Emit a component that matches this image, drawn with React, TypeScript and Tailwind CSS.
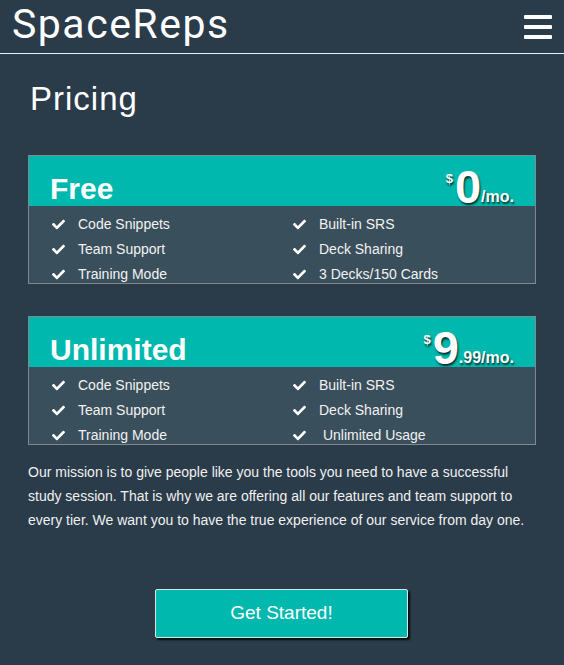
import { FaCheck } from "react-icons/fa";

type Plan = {
  name: string;
  whole: string;
  cents?: string;
  features: string[];
};

const plans: Plan[] = [
  {
    name: "Free",
    whole: "0",
    features: [
      "Code Snippets",
      "Built-in SRS",
      "Team Support",
      "Deck Sharing",
      "Training Mode",
      "3 Decks/150 Cards",
    ],
  },
  {
    name: "Unlimited",
    whole: "9",
    cents: ".99",
    features: [
      "Code Snippets",
      "Built-in SRS",
      "Team Support",
      "Deck Sharing",
      "Training Mode",
      "\u00a0Unlimited Usage",
    ],
  },
];

const PlanCard = ({ plan }: { plan: Plan }) => {
  return (
    <div className="border border-[#7e888d]">
      <div className="h-[50px] bg-[#00b8ad] flex justify-between items-end pl-[21px] pr-[21px]">
        <h3 className="text-[30px] leading-[30px] font-bold text-white mb-[2px]">
          {plan.name}
        </h3>
        <div className="flex items-end text-white font-bold [text-shadow:1px_2px_2px_rgba(0,0,0,0.75)]">
          <span className="text-[13px] leading-[13px] mb-[21px] mr-[2px]">$</span>
          <span className="text-[47px] leading-[40px] -mb-px">{plan.whole}</span>
          <span className="text-[16px] leading-[16px] mb-[1px]">
            {plan.cents ?? ""}/mo.
          </span>
        </div>
      </div>
      <ul className="h-[77px] bg-[#3a4f5c] grid grid-cols-[241px_1fr] pl-[23px] pt-[6px]">
        {plan.features.map((f, i) => (
          <li key={i} className="h-[25px] flex items-center gap-[13px] text-[14px] text-[#f2f2f2]">
            <FaCheck className="w-[13px] h-[13px] text-white shrink-0" />
            <span className="whitespace-pre">{f}</span>
          </li>
        ))}
      </ul>
    </div>
  );
};

export default function App() {
  return (
    <div className="min-h-screen w-full bg-[#2a3b4a] text-white [font-family:'Liberation_Sans',Arial,sans-serif]">
      <header className="h-[54px] border-b border-[#f0f0f0] flex items-start justify-between pl-[12px] pr-[12px]">
        <h1 className="text-[41px] leading-[49px] tracking-[1.5px] [font-family:Roboto,sans-serif] text-white">
          SpaceReps
        </h1>
        <button className="flex flex-col gap-[6px] w-[28px] mt-[15px]">
          <span className="h-[4px] w-full bg-white rounded-[1px]" />
          <span className="h-[4px] w-full bg-white rounded-[1px]" />
          <span className="h-[4px] w-full bg-white rounded-[1px]" />
        </button>
      </header>

      <main className="px-[28px]">
        <h2 className="mt-[26px] pl-[2px] text-[33px] leading-[38px] tracking-[1px] font-light text-white">
          Pricing
        </h2>

        <div className="mt-[37px] flex flex-col gap-[32px]">
          {plans.map((p) => (
            <PlanCard key={p.name} plan={p} />
          ))}
        </div>

        <p className="mt-[15px] text-[14px] leading-[24px] text-[#f0f0f0]">
          Our mission is to give people like you the tools you need to have a successful
          study session. That is why we are offering all our features and team support to
          every tier. We want you to have the true experience of our service from day one.
        </p>

        <div className="flex justify-center mt-[57px] pb-[28px]">
          <button className="w-[253px] h-[49px] -ml-px bg-[#00b8ad] border border-[#d8e6e4] rounded-[2px] shadow-[2px_2px_2px_rgba(0,0,0,0.85)] text-[19px] text-white">
            Get Started!
          </button>
        </div>
      </main>
    </div>
  );
}
